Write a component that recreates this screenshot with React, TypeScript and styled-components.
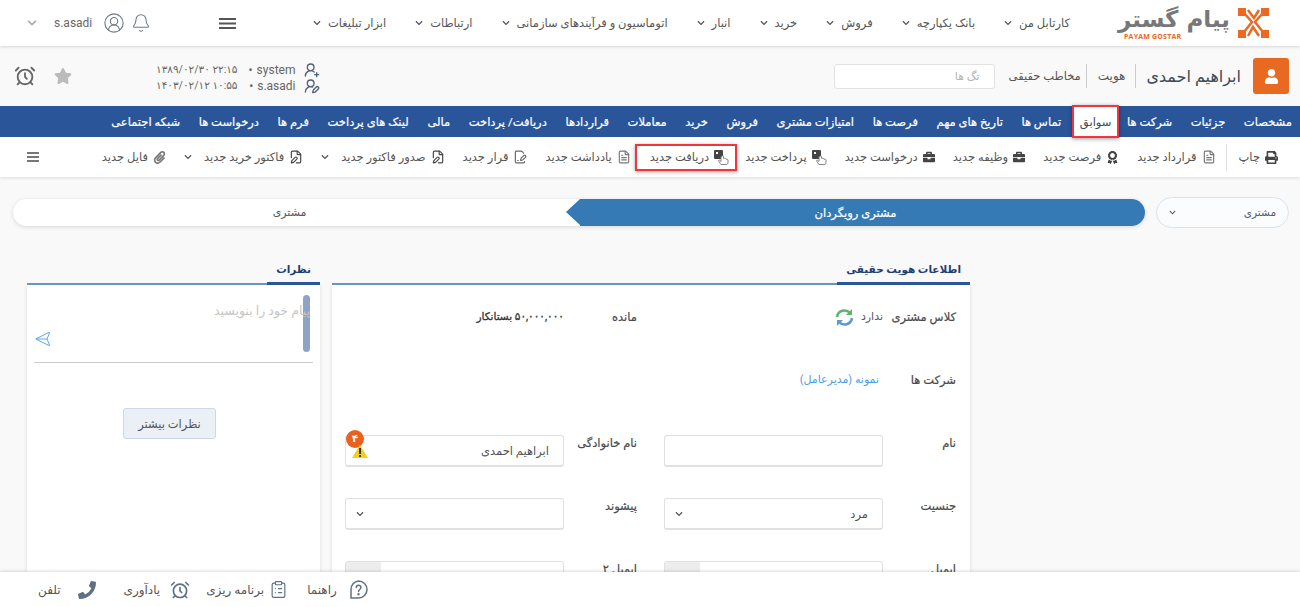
import React from 'react'
import styled, { createGlobalStyle } from 'styled-components'
import {
  FaAward,
  FaBriefcase,
  FaChevronDown,
  FaPaperclip,
  FaPhoneAlt,
  FaPrint,
  FaStar,
  FaUser,
} from 'react-icons/fa'
import {
  AlarmClock,
  Bell,
  CircleUserRound,
  ClipboardList,
  FilePen,
  FileSignature,
  FileText,
  Send,
  UserRoundPen,
  UserRoundPlus,
} from 'lucide-react'

const GlobalStyle = createGlobalStyle`
  html, body {
    margin: 0;
    height: 100%;
    background: #f9f9f9;
    font-family: Roboto, "DejaVu Sans", sans-serif;
    color: #4a4a4a;
  }
  * { box-sizing: border-box; }
`

const topMenu = [
  'کارتابل من',
  'بانک یکپارچه',
  'فروش',
  'خرید',
  'انبار',
  'اتوماسیون و فرآیندهای سازمانی',
  'ارتباطات',
  'ابزار تبلیغات',
]

const tabs = [
  'مشخصات',
  'جزئیات',
  'شرکت ها',
  'سوابق',
  'تماس ها',
  'تاریخ های مهم',
  'فرصت ها',
  'امتیازات مشتری',
  'فروش',
  'خرید',
  'معاملات',
  'قراردادها',
  'دریافت/ پرداخت',
  'مالی',
  'لینک های پرداخت',
  'فرم ها',
  'درخواست ها',
  'شبکه اجتماعی',
]

const HandIcon = () => (
  <svg width="15" height="15" viewBox="0 0 15 15">
    <rect x="0" y="0" width="9" height="9" rx="1" fill="#444" />
    <rect x="2" y="2" width="2" height="2" fill="#fff" />
    <path
      d="M7 6.500v5l-1.300-1.200c-.7-.5-1.400.2-1 .9L7 14.500h5.500c1 0 1.500-1 1.500-2V10c0-.8-1-1-1.500-.6 0-.8-1-1-1.500-.5 0-.8-1-1-1.500-.5V6.500c0-1-1.500-1-1.500 0z"
      fill="#fff"
      stroke="#777"
      strokeWidth="0.9"
    />
  </svg>
)

const BurgerIcon = ({ width, height, weight }: { width: number; height: number; weight: number }) => (
  <svg width={width} height={height} viewBox={`0 0 ${width} ${height}`} fill="currentColor">
    <rect width={width} height={weight} />
    <rect y={(height - weight) / 2} width={width} height={weight} />
    <rect y={height - weight} width={width} height={weight} />
  </svg>
)

const toolbar = [
  { label: 'قرارداد جدید', icon: <FileText size={14} color="#777" /> },
  { label: 'فرصت جدید', icon: <FaAward size={13} color="#444" /> },
  { label: 'وظیفه جدید', icon: <FaBriefcase size={12} color="#444" /> },
  { label: 'درخواست جدید', icon: <FaBriefcase size={12} color="#444" /> },
  { label: 'پرداخت جدید', icon: <HandIcon /> },
  { label: 'دریافت جدید', icon: <HandIcon />, marked: true },
  { label: 'یادداشت جدید', icon: <FileText size={14} color="#777" /> },
  { label: 'قرار جدید', icon: <FileSignature size={14} color="#666" /> },
  { label: 'صدور فاکتور جدید', icon: <FilePen size={14} color="#444" />, caret: true },
  { label: 'فاکتور خرید جدید', icon: <FilePen size={14} color="#444" />, caret: true },
  { label: 'فایل جدید', icon: <FaPaperclip size={13} color="#777" /> },
]

function HelpIcon() {
  return (
    <svg width="19" height="19" viewBox="0 0 19 19" fill="none" stroke="#5f7187" strokeWidth="1.500">
      <path d="M9.500 1a8.300 8.300 0 1 1 0 17H2v-8.500A8.400 8.400 0 0 1 9.500 1z" />
      <path d="M7.300 7.500c0-3 4.600-3 4.600 0 0 2-2.400 2-2.400 4" strokeLinecap="round" />
      <circle cx="9.500" cy="14.200" r="0.500" />
    </svg>
  )
}

const footerItems = [
  { label: 'راهنما', gap: 12, space: 19, icon: <HelpIcon /> },
  { label: 'برنامه ریزی', gap: 5, space: 16, icon: <ClipboardList size={19} color="#5f7187" strokeWidth={1.500} /> },
  { label: 'یادآوری', gap: 10, space: 28, icon: <AlarmClock size={20} color="#5f7187" strokeWidth={2} /> },
  { label: 'تلفن', gap: 17, space: 0, icon: <FaPhoneAlt size={18} color="#5f7187" style={{ transform: 'scaleX(-1)' }} /> },
]

const Page = styled.div.attrs({ dir: 'rtl' })`
  display: flex;
  flex-direction: column;
  height: 100vh;
  overflow: hidden;
`
const TopBar = styled.header`
  position: relative;
  z-index: 3;
  display: flex;
  align-items: center;
  height: 46px;
  flex: none;
  padding: 0 31px 0 27px;
  background: #fff;
  box-shadow: 0 1px 3px rgba(0, 0, 0, 0.14);
`
const Logo = styled.div`
  position: relative;
  display: flex;
  align-items: center;
  gap: 8px;
  margin-left: 48px;
  width: 151px;
  flex: none;
`
const LogoName = styled.span`
  font-family: "DejaVu Sans", sans-serif;
  font-size: 23px;
  font-weight: 700;
  color: #77787a;
  white-space: nowrap;
  line-height: 26px;
  padding-bottom: 9px;
  letter-spacing: -1.200px;
`
const LogoLatin = styled.span`
  position: absolute;
  left: 6px;
  bottom: 0;
  font: 700 7px/8px "Open Sans", sans-serif;
  color: #e8681f;
  letter-spacing: 0.2px;
  direction: ltr;
`
const TopMenu = styled.nav`
  display: flex;
  align-items: center;
  gap: 29px;
`
const TopItem = styled.span`
  display: flex;
  align-items: center;
  gap: 7px;
  font-size: 11.500px;
  color: #555;
  white-space: nowrap;
`
const Burger = styled.span`
  display: flex;
  margin-right: 77px;
  color: #555;
`
const UserBox = styled.div`
  display: flex;
  align-items: center;
  margin-right: auto;
  gap: 6px;
  color: #6f7a85;
`
const UserName = styled.span`
  font-size: 12px;
  color: #666;
  margin-left: 11px;
  margin-right: 5px;
`
const InfoBar = styled.section`
  display: flex;
  align-items: center;
  height: 60px;
  flex: none;
  padding: 0 11px 0 14px;
  background: #f9f9f9;
`
const Avatar = styled.div`
  display: flex;
  align-items: center;
  justify-content: center;
  width: 36px;
  height: 36px;
  border-radius: 3px;
  background: #e86a22;
  color: #fff;
`
const PersonName = styled.h1`
  margin: 0 12px 0 0;
  font-size: 16px;
  font-weight: 400;
  color: #3e4a57;
  white-space: nowrap;
`
const Meta = styled.span<{ $divided?: boolean }>`
  font-size: ${(p) => (p.$divided ? '11.500px' : '12px')};
  color: #555;
  white-space: nowrap;
  padding-right: ${(p) => (p.$divided ? '5px' : '10px')};
  margin-right: ${(p) => (p.$divided ? '11px' : '10px')};
  border-right: 1px solid #ccc;
  line-height: 24px;
`
const TagInput = styled.div`
  width: 161px;
  height: 25px;
  margin-right: 14px;
  padding: 0 14px;
  line-height: 24px;
  font-size: 11px;
  color: #b5b5b5;
  background: #fff;
  border: 1px solid #e2e2e2;
  border-radius: 3px;
`
const Audit = styled.div`
  display: grid;
  grid-template-columns: auto auto auto;
  justify-content: start;
  align-items: center;
  column-gap: 8px;
  margin-right: auto;
  margin-top: 3px;
  font-size: 12px;
  color: #666;
`
const AuditIcon = styled.span`
  display: flex;
  color: #4f6078;
`
const AuditUser = styled.span`
  direction: ltr;
  text-align: right;
  width: 50px;
  &::before {
    content: '•';
    margin-right: 4px;
  }
`
const AuditDate = styled.span`
  font-size: 10.500px;
  direction: ltr;
  white-space: nowrap;
`
const Star = styled(FaStar)`
  margin-right: 84px;
  color: #bbb;
`
const Clock = styled(AlarmClock)`
  margin-right: 18px;
  color: #666;
`
const TabBar = styled.nav`
  position: relative;
  z-index: 2;
  display: flex;
  align-items: center;
  gap: 18.600px;
  height: 31px;
  flex: none;
  padding: 0 8px;
  background: #2a5599;
`
const Tab = styled.span<{ $marked?: boolean }>`
  display: flex;
  align-items: center;
  height: ${(p) => (p.$marked ? '33px' : 'auto')};
  padding: 0 ${(p) => (p.$marked ? '6px' : '0')};
  margin: ${(p) => (p.$marked ? '0 -11px 0 -8px' : '0')};
  font-size: 11.500px;
  -webkit-text-stroke: ${(p) => (p.$marked ? '0' : '0.2px')};
  white-space: nowrap;
  color: ${(p) => (p.$marked ? '#3a4a5a' : '#fff')};
  background: ${(p) => (p.$marked ? '#fff' : 'transparent')};
  border: ${(p) => (p.$marked ? '2px solid #f0353d' : 'none')};
  box-shadow: ${(p) => (p.$marked ? '0 1px 4px rgba(0,0,0,.4)' : 'none')};
`
const ToolBar = styled.div`
  position: relative;
  z-index: 1;
  display: flex;
  align-items: center;
  height: 40px;
  flex: none;
  padding: 0 22px 0 27px;
  background: #fff;
  box-shadow: 0 1px 3px rgba(0, 0, 0, 0.12);
`
const ToolItem = styled.span<{ $marked?: boolean; $first?: boolean }>`
  display: flex;
  align-items: center;
  gap: 5px;
  height: 27px;
  font-size: 11.500px;
  color: #555;
  white-space: nowrap;
  margin: ${(p) => (p.$marked ? '0 -10px 0 -14px' : p.$first ? '0 0 0 12px' : '0')};
  padding: ${(p) => (p.$marked ? '0 6px 0 13px' : '0')};
  border: ${(p) => (p.$marked ? '2px solid #f0353d' : 'none')};
  box-shadow: ${(p) => (p.$marked ? '0 1px 4px rgba(0,0,0,.35)' : 'none')};
`
const ToolCaret = styled(FaChevronDown)`
  margin-right: 7px;
`
const ToolGroup = styled.div`
  display: flex;
  align-items: center;
  gap: 18px;
  padding-right: 10px;
  border-right: 1px solid #ddd;
`
const ToolMenu = styled.span`
  display: flex;
  margin-right: auto;
  color: #777;
`
const Main = styled.main`
  flex: 1;
  min-height: 0;
  overflow: hidden;
  padding: 20px 11px 0 13px;
`
const StageRow = styled.div`
  display: flex;
  align-items: center;
  gap: 11px;
  height: 31px;
`
const StageSelect = styled.div`
  display: flex;
  align-items: center;
  justify-content: space-between;
  width: 133px;
  height: 31px;
  padding: 0 12px;
  font-size: 10.500px;
  color: #4f5d75;
  background: #fbfcfd;
  border: 1px solid #d8e2ec;
  border-radius: 16px;
`
const StageTrack = styled.div`
  display: flex;
  flex: 1;
  height: 27px;
  border-radius: 14px;
  background: #fff;
  box-shadow: 0 1px 4px rgba(0, 0, 0, 0.14);
`
const StageActive = styled.div`
  position: relative;
  display: flex;
  align-items: center;
  justify-content: center;
  width: 565px;
  border-radius: 0 14px 14px 0;
  background: #3579b5;
  color: #fff;
  font-size: 11.500px;
  -webkit-text-stroke: 0.2px;
  &::before {
    content: '';
    width: 14px;
  }
  &::after {
    content: '';
    position: absolute;
    left: -14px;
    top: 0;
    border-style: solid;
    border-width: 13.500px 14px 13.500px 0;
    border-color: transparent #3579b5 transparent transparent;
  }
`
const StageRest = styled.div`
  display: flex;
  align-items: center;
  justify-content: center;
  flex: 1;
  padding-right: 14px;
  font-size: 11px;
  color: #555;
`
const Panels = styled.div`
  display: grid;
  grid-template-columns: 638px 293px;
  gap: 12px;
  margin: 29px 319px 0 0;
`
const TabHead = styled.div`
  display: flex;
  height: 28px;
  border-bottom: 2px solid #6d9cc6;
`
const TabTitle = styled.span`
  height: 28px;
  padding: 0 9px;
  font-size: 10.500px;
  font-weight: 700;
  line-height: 25px;
  white-space: nowrap;
  color: #1f3f73;
  border-bottom: 3px solid #2a5599;
`
const Card = styled.div`
  height: 320px;
  background: #fff;
  box-shadow: 0 0 4px rgba(0, 0, 0, 0.12);
`
const Form = styled(Card)`
  display: grid;
  grid-template-columns: 319px 293px;
  grid-auto-rows: 63px;
  padding: 22px 14px 0 0;
`
const Field = styled.div<{ $wide?: boolean }>`
  display: flex;
  align-items: flex-start;
  grid-column: ${(p) => (p.$wide ? 'span 2' : 'auto')};
`
const Label = styled.label`
  width: 73px;
  flex: none;
  font-size: 11.500px;
  line-height: 30px;
  margin-top: -5px;
  color: #4a4a4a;
  -webkit-text-stroke: 0.2px;
  white-space: nowrap;
`
const Value = styled.span<{ $strong?: boolean; $link?: boolean }>`
  font-size: ${(p) => (p.$strong ? '10.500px' : '11px')};
  line-height: 20px;
  padding-right: ${(p) => (p.$link ? '4px' : '0')};
  -webkit-text-stroke: ${(p) => (p.$strong ? '0.3px' : '0')};
  color: ${(p) => (p.$link ? '#4a9de8' : p.$strong ? '#333' : '#555')};
  white-space: nowrap;
`
const ClassValue = styled.div`
  display: flex;
  align-items: center;
  gap: 7px;
`
const Box = styled.div`
  position: relative;
  display: flex;
  align-items: center;
  justify-content: space-between;
  width: 219px;
  height: 32px;
  padding: 0 14px 0 10px;
  margin-top: 2px;
  font-size: 11.500px;
  color: #555;
  background: #fff;
  border: 1px solid #e0e0e0;
  border-bottom-width: 2px;
  border-radius: 3px;
`
const BoxAddon = styled.span`
  position: absolute;
  left: 0;
  top: 0;
  width: 35px;
  height: 100%;
  background: #ededed;
`
const Warning = styled.span`
  position: absolute;
  left: 1px;
  top: -6px;
  width: 20px;
  height: 30px;
`
const WarningBadge = styled.span`
  position: absolute;
  left: -1px;
  top: 0;
  width: 18px;
  height: 18px;
  border-radius: 50%;
  background: #e8611e;
  color: #fff;
  font-size: 10px;
  font-weight: 700;
  line-height: 17px;
  text-align: center;
`
const Comments = styled(Card)`
  padding: 0 7px;
`
const Composer = styled.div`
  display: flex;
  align-items: flex-start;
  justify-content: space-between;
  height: 78px;
  padding: 10px 3px 0 3px;
  border-bottom: 1px solid #ccc;
`
const Placeholder = styled.div`
  margin-top: 8px;
  font-size: 12.500px;
  line-height: 16px;
  color: #c6c6c6;
  margin-left: auto;
  white-space: nowrap;
`
const ComposerScroll = styled.span`
  order: -1;
  width: 7px;
  height: 57px;
  margin-left: -7px;
  border-radius: 4px;
  background: #8ca4c6;
`
const SendIcon = styled(Send)`
  margin-top: 35px;
  color: #4a9de8;
  transform: rotate(-135deg) scale(0.95);
`
const MoreWrap = styled.div`
  display: flex;
  justify-content: center;
  padding: 45px 8px 0 0;
`
const MoreButton = styled.button`
  width: 93px;
  height: 31px;
  font-family: inherit;
  font-size: 11.500px;
  color: #555;
  background: #ebf0f6;
  border: 1px solid #ccd8e5;
  border-radius: 3px;
`
const Footer = styled.footer`
  position: relative;
  z-index: 3;
  display: flex;
  align-items: center;
  justify-content: flex-end;
  height: 35px;
  flex: none;
  padding: 0 0 0 38px;
  background: #fff;
  box-shadow: 0 -1px 3px rgba(0, 0, 0, 0.14);
`
const FooterItem = styled.span<{ $gap: number; $space: number }>`
  display: flex;
  align-items: center;
  gap: ${(p) => p.$gap}px;
  margin-left: ${(p) => p.$space}px;
  font-size: 12px;
  color: #555;
  white-space: nowrap;
`

const Caret = () => <FaChevronDown size={8} />

const Mark = () => (
  <svg width="31" height="32" viewBox="0 0 31 32" fill="none">
    <g fill="#ea6a24">
      <rect x="0" y="1" width="8" height="8" />
      <rect x="23" y="1" width="8" height="8" />
      <rect x="0" y="23" width="8" height="8" />
      <rect x="23" y="23" width="8" height="8" />
    </g>
    <g stroke="#ea6a24" strokeWidth="2.500" fill="none">
      <path d="M6 6l8 9-8 10" />
      <path d="M25 6l-8 9 8 10" />
      <path d="M10 3l6 8 5-8" />
      <path d="M10 29l5-9 6 9" />
    </g>
  </svg>
)

const Refresh = () => (
  <svg width="19" height="19" viewBox="0 0 19 19" fill="none" strokeWidth="2.600">
    <path d="M2 9a7.500 7.500 0 0 1 13-4" stroke="#5db56b" />
    <path d="M17 1v6h-6z" fill="#5db56b" />
    <path d="M17 10a7.500 7.500 0 0 1-13 4" stroke="#5b9bd0" />
    <path d="M2 18v-6h6z" fill="#5b9bd0" />
  </svg>
)

const Triangle = () => (
  <svg width="16" height="13" viewBox="0 0 16 13" style={{ position: 'absolute', left: 5, top: 15 }}>
    <path d="M8 0l8 13H0z" fill="#f5cf1f" />
    <rect x="7" y="3" width="2" height="6" fill="#333" />
    <rect x="7" y="10" width="2" height="2" fill="#333" />
  </svg>
)

export default function App() {
  return (
    <>
      <GlobalStyle />
      <Page>
        <TopBar>
          <Logo>
            <Mark />
            <LogoName>پیام گستر</LogoName>
            <LogoLatin>PAYAM GOSTAR</LogoLatin>
          </Logo>
          <TopMenu>
            {topMenu.map((item) => (
              <TopItem key={item}>
                {item}
                <Caret />
              </TopItem>
            ))}
          </TopMenu>
          <Burger>
            <BurgerIcon width={17} height={11} weight={2} />
          </Burger>
          <UserBox>
            <Bell size={20} strokeWidth={1.300} />
            <CircleUserRound size={22} strokeWidth={1.200} />
            <UserName>s.asadi</UserName>
            <FaChevronDown size={10} color="#aaa" />
          </UserBox>
        </TopBar>

        <InfoBar>
          <Avatar>
            <FaUser size={15} />
          </Avatar>
          <PersonName>ابراهیم احمدی</PersonName>
          <Meta>هویت</Meta>
          <Meta $divided>مخاطب حقیقی</Meta>
          <TagInput>تگ ها</TagInput>
          <Audit>
            <AuditIcon>
              <UserRoundPlus size={16} />
            </AuditIcon>
            <AuditUser>system</AuditUser>
            <AuditDate>۱۳۸۹/۰۲/۳۰ ۲۲:۱۵</AuditDate>
            <AuditIcon>
              <UserRoundPen size={16} />
            </AuditIcon>
            <AuditUser>s.asadi</AuditUser>
            <AuditDate>۱۴۰۳/۰۲/۱۲ ۱۰:۵۵</AuditDate>
          </Audit>
          <Star size={18} />
          <Clock size={22} />
        </InfoBar>

        <TabBar>
          {tabs.map((tab) => (
            <Tab key={tab} $marked={tab === 'سوابق'}>
              {tab}
            </Tab>
          ))}
        </TabBar>

        <ToolBar>
          <ToolItem $first>
            <FaPrint size={13} color="#444" />
            چاپ
          </ToolItem>
          <ToolGroup>
            {toolbar.map((t) => (
              <ToolItem key={t.label} $marked={t.marked}>
                {t.icon}
                {t.label}
                {t.caret && <ToolCaret size={8} />}
              </ToolItem>
            ))}
          </ToolGroup>
          <ToolMenu>
            <BurgerIcon width={12} height={10} weight={2} />
          </ToolMenu>
        </ToolBar>

        <Main>
          <StageRow>
            <StageSelect>
              مشتری
              <FaChevronDown size={7} />
            </StageSelect>
            <StageTrack>
              <StageActive>مشتری رویگردان</StageActive>
              <StageRest>مشتری</StageRest>
            </StageTrack>
          </StageRow>

          <Panels>
            <div>
              <TabHead>
                <TabTitle>اطلاعات هویت حقیقی</TabTitle>
              </TabHead>
              <Form>
                <Field>
                  <Label>کلاس مشتری</Label>
                  <ClassValue>
                    <Value>ندارد</Value>
                    <Refresh />
                  </ClassValue>
                </Field>
                <Field>
                  <Label>مانده</Label>
                  <Value $strong>۵۰,۰۰۰,۰۰۰ بستانکار</Value>
                </Field>
                <Field $wide>
                  <Label>شرکت ها</Label>
                  <Value $link>نمونه (مدیرعامل)</Value>
                </Field>
                <Field>
                  <Label>نام</Label>
                  <Box />
                </Field>
                <Field>
                  <Label>نام خانوادگی</Label>
                  <Box>
                    ابراهیم احمدی
                    <Warning>
                      <WarningBadge>۴</WarningBadge>
                      <Triangle />
                    </Warning>
                  </Box>
                </Field>
                <Field>
                  <Label>جنسیت</Label>
                  <Box>
                    مرد
                    <FaChevronDown size={8} />
                  </Box>
                </Field>
                <Field>
                  <Label>پیشوند</Label>
                  <Box>
                    <span />
                    <FaChevronDown size={8} />
                  </Box>
                </Field>
                <Field>
                  <Label>ایمیل</Label>
                  <Box>
                    <BoxAddon />
                  </Box>
                </Field>
                <Field>
                  <Label>ایمیل ۲</Label>
                  <Box>
                    <BoxAddon />
                  </Box>
                </Field>
              </Form>
            </div>

            <div>
              <TabHead>
                <TabTitle>نظرات</TabTitle>
              </TabHead>
              <Comments>
                <Composer>
                  <ComposerScroll />
                  <Placeholder>پیام خود را بنویسید</Placeholder>
                  <SendIcon size={18} strokeWidth={1.200} />
                </Composer>
                <MoreWrap>
                  <MoreButton>نظرات بیشتر</MoreButton>
                </MoreWrap>
              </Comments>
            </div>
          </Panels>
        </Main>

        <Footer>
          {footerItems.map((f) => (
            <FooterItem key={f.label} $gap={f.gap} $space={f.space}>
              {f.icon}
              {f.label}
            </FooterItem>
          ))}
        </Footer>
      </Page>
    </>
  )
}
